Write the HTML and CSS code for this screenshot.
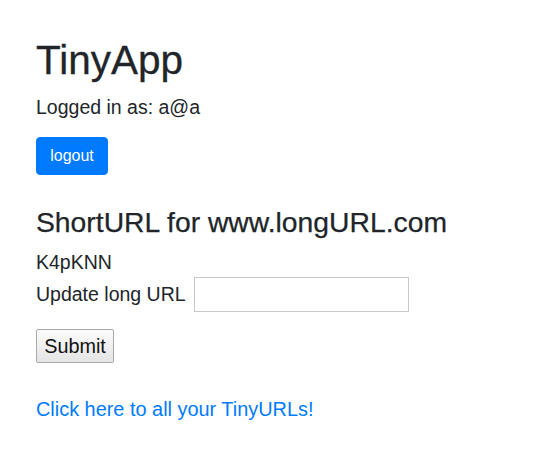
FILE: index.html
```html
<!DOCTYPE html>
<html>
<head>
<meta charset="utf-8">
<title>TinyApp</title>
<link rel="stylesheet" href="styles.css">
</head>
<body>
<div class="page">
  <h1 class="title">TinyApp</h1>
  <p class="text login">Logged in as: a@a</p>
  <form class="logout-form">
    <button type="button" class="btn-primary">logout</button>
  </form>
  <h3 class="subtitle">ShortURL for www.longURL.com</h3>
  <p class="text short">K4pKNN</p>
  <form class="update-form">
    <div class="row">
      <label class="text label" for="longURL">Update long URL</label>
      <input class="url-input" id="longURL" type="text">
    </div>
    <button type="button" class="btn-submit">Submit</button>
  </form>
  <a class="text link" href="#">Click here to all your TinyURLs!</a>
</div>
</body>
</html>
```

FILE: styles.css
```css
html, body {
  margin: 0;
  padding: 0;
  background: #fff;
}
.page {
  padding: 36px 0 0 36px;
  font-family: "Liberation Sans", Arial, sans-serif;
  color: #212529;
  display: flex;
  flex-direction: column;
  align-items: flex-start;
}
.title {
  font-size: 40.5px;
  font-weight: 400;
  line-height: 48px;
  margin: 0 0 9px 0;
  -webkit-text-stroke: 0.3px #212529;
}
.text {
  font-size: 19.5px;
  line-height: 29px;
  margin: 0;
}
.logout-form {
  margin: 15px 0 0 0;
}
.btn-primary {
  font-family: "Liberation Sans", Arial, sans-serif;
  font-size: 16px;
  line-height: 24px;
  height: 38px;
  width: 72px;
  padding: 6px 0;
  border: 1px solid #007bff;
  border-radius: 4px;
  background: #007bff;
  color: #fff;
}
.subtitle {
  font-size: 28.3px;
  font-weight: 400;
  line-height: 34px;
  margin: 30px 0 9px 0;
  -webkit-text-stroke: 0.25px #212529;
}
.update-form {
  display: flex;
  flex-direction: column;
  align-items: flex-start;
}
.row {
  display: flex;
  align-items: center;
  gap: 8px;
}
.url-input {
  width: 215px;
  height: 35px;
  box-sizing: border-box;
  border: 1px solid #c8c8c8;
  border-radius: 0;
  margin: 0;
  padding: 2px 4px;
  font-size: 16px;
}
.btn-submit {
  margin-top: 17px;
  font-family: "Liberation Sans", Arial, sans-serif;
  font-size: 19.8px;
  height: 34px;
  width: 78px;
  padding: 0;
  color: #111;
  border: 1px solid #a9a9a9;
  border-radius: 2px;
  background: linear-gradient(#fcfcfc, #e4e4e4);
}
.link {
  margin-top: 32px;
  font-size: 19.9px;
  color: #007bff;
  text-decoration: none;
}
```
